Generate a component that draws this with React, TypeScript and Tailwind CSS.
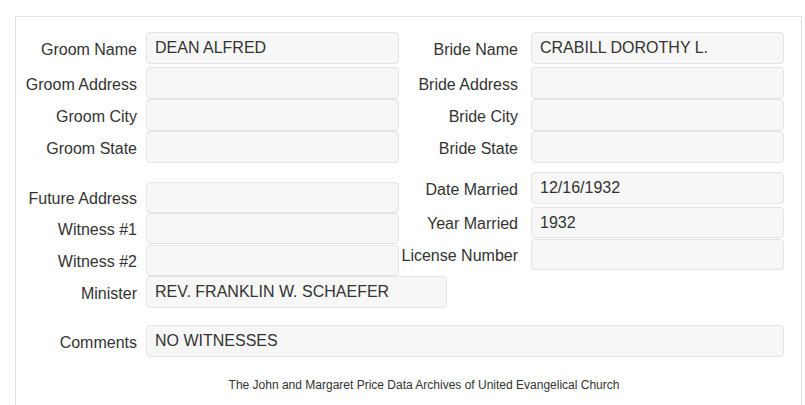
import React from "react";

type Field = {
  label: string;
  value?: string;
  h: string;
  mt: string;
  w?: string;
};

// left and right columns of the record, top to bottom
const LEFT: Field[] = [
  { label: "Groom Name", value: "DEAN ALFRED", h: "h-[32px]", mt: "mt-0" },
  { label: "Groom Address", h: "h-[32px]", mt: "mt-[3px]" },
  { label: "Groom City", h: "h-[32px]", mt: "mt-0" },
  { label: "Groom State", h: "h-[32px]", mt: "mt-0" },
  { label: "Future Address", h: "h-[31px]", mt: "mt-[19px]" },
  { label: "Witness #1", h: "h-[31px]", mt: "mt-0" },
  { label: "Witness #2", h: "h-[31px]", mt: "mt-[1px]" },
  { label: "Minister", value: "REV. FRANKLIN W. SCHAEFER", h: "h-[32px]", mt: "mt-0", w: "w-[301px]" },
];

const RIGHT: Field[] = [
  { label: "Bride Name", value: "CRABILL DOROTHY L.", h: "h-[32px]", mt: "mt-0" },
  { label: "Bride Address", h: "h-[32px]", mt: "mt-[3px]" },
  { label: "Bride City", h: "h-[32px]", mt: "mt-0" },
  { label: "Bride State", h: "h-[32px]", mt: "mt-0" },
  { label: "Date Married", value: "12/16/1932", h: "h-[32px]", mt: "mt-[9px]" },
  { label: "Year Married", value: "1932", h: "h-[31px]", mt: "mt-[3px]" },
  { label: "License Number", h: "h-[31px]", mt: "mt-[1px]" },
];

function Row({ f, labelW, gap }: { f: Field; labelW: string; gap: string }) {
  return (
    <div className={`flex items-center ${f.mt}`}>
      <label className={`${labelW} shrink-0 text-right pt-[3px] whitespace-nowrap`}>{f.label}</label>
      <input
        readOnly
        defaultValue={f.value ?? ""}
        className={`${gap} ${f.w ?? "w-[253px]"} ${f.h} shrink-0 rounded-[4px] border border-[#e3e3e3] bg-[#f7f7f7] px-[8px] text-[#333] outline-none`}
      />
    </div>
  );
}

export default function App() {
  return (
    <div
      className="bg-white pl-[15px] pt-[16px] text-[16px] leading-[20px] text-[#333]"
      style={{ fontFamily: '"Liberation Sans", Arial, sans-serif' }}
    >
      <div className="w-[787px] h-[389px] border border-b-0 border-[#e3e3e3] pt-[15px]">
        <div className="flex">
          <div className="flex w-[383px] flex-col">
            {LEFT.map((f) => (
              <Row key={f.label} f={f} labelW="w-[121px]" gap="ml-[9px]" />
            ))}
          </div>
          <div className="flex flex-col">
            {RIGHT.map((f) => (
              <Row key={f.label} f={f} labelW="w-[119px]" gap="ml-[13px]" />
            ))}
          </div>
        </div>

        <div className="mt-[17px] flex items-center">
          <label className="w-[121px] shrink-0 text-right pt-[3px]">Comments</label>
          <input
            readOnly
            defaultValue="NO WITNESSES"
            className="ml-[9px] h-[32px] w-[638px] shrink-0 rounded-[4px] border border-[#e3e3e3] bg-[#f7f7f7] px-[8px] text-[#333] outline-none"
          />
        </div>

        <p className="mt-[21px] ml-[130px] w-[556px] text-center text-[12px] leading-[14px] text-[#333]">
          The John and Margaret Price Data Archives of United Evangelical Church
        </p>
      </div>
    </div>
  );
}
